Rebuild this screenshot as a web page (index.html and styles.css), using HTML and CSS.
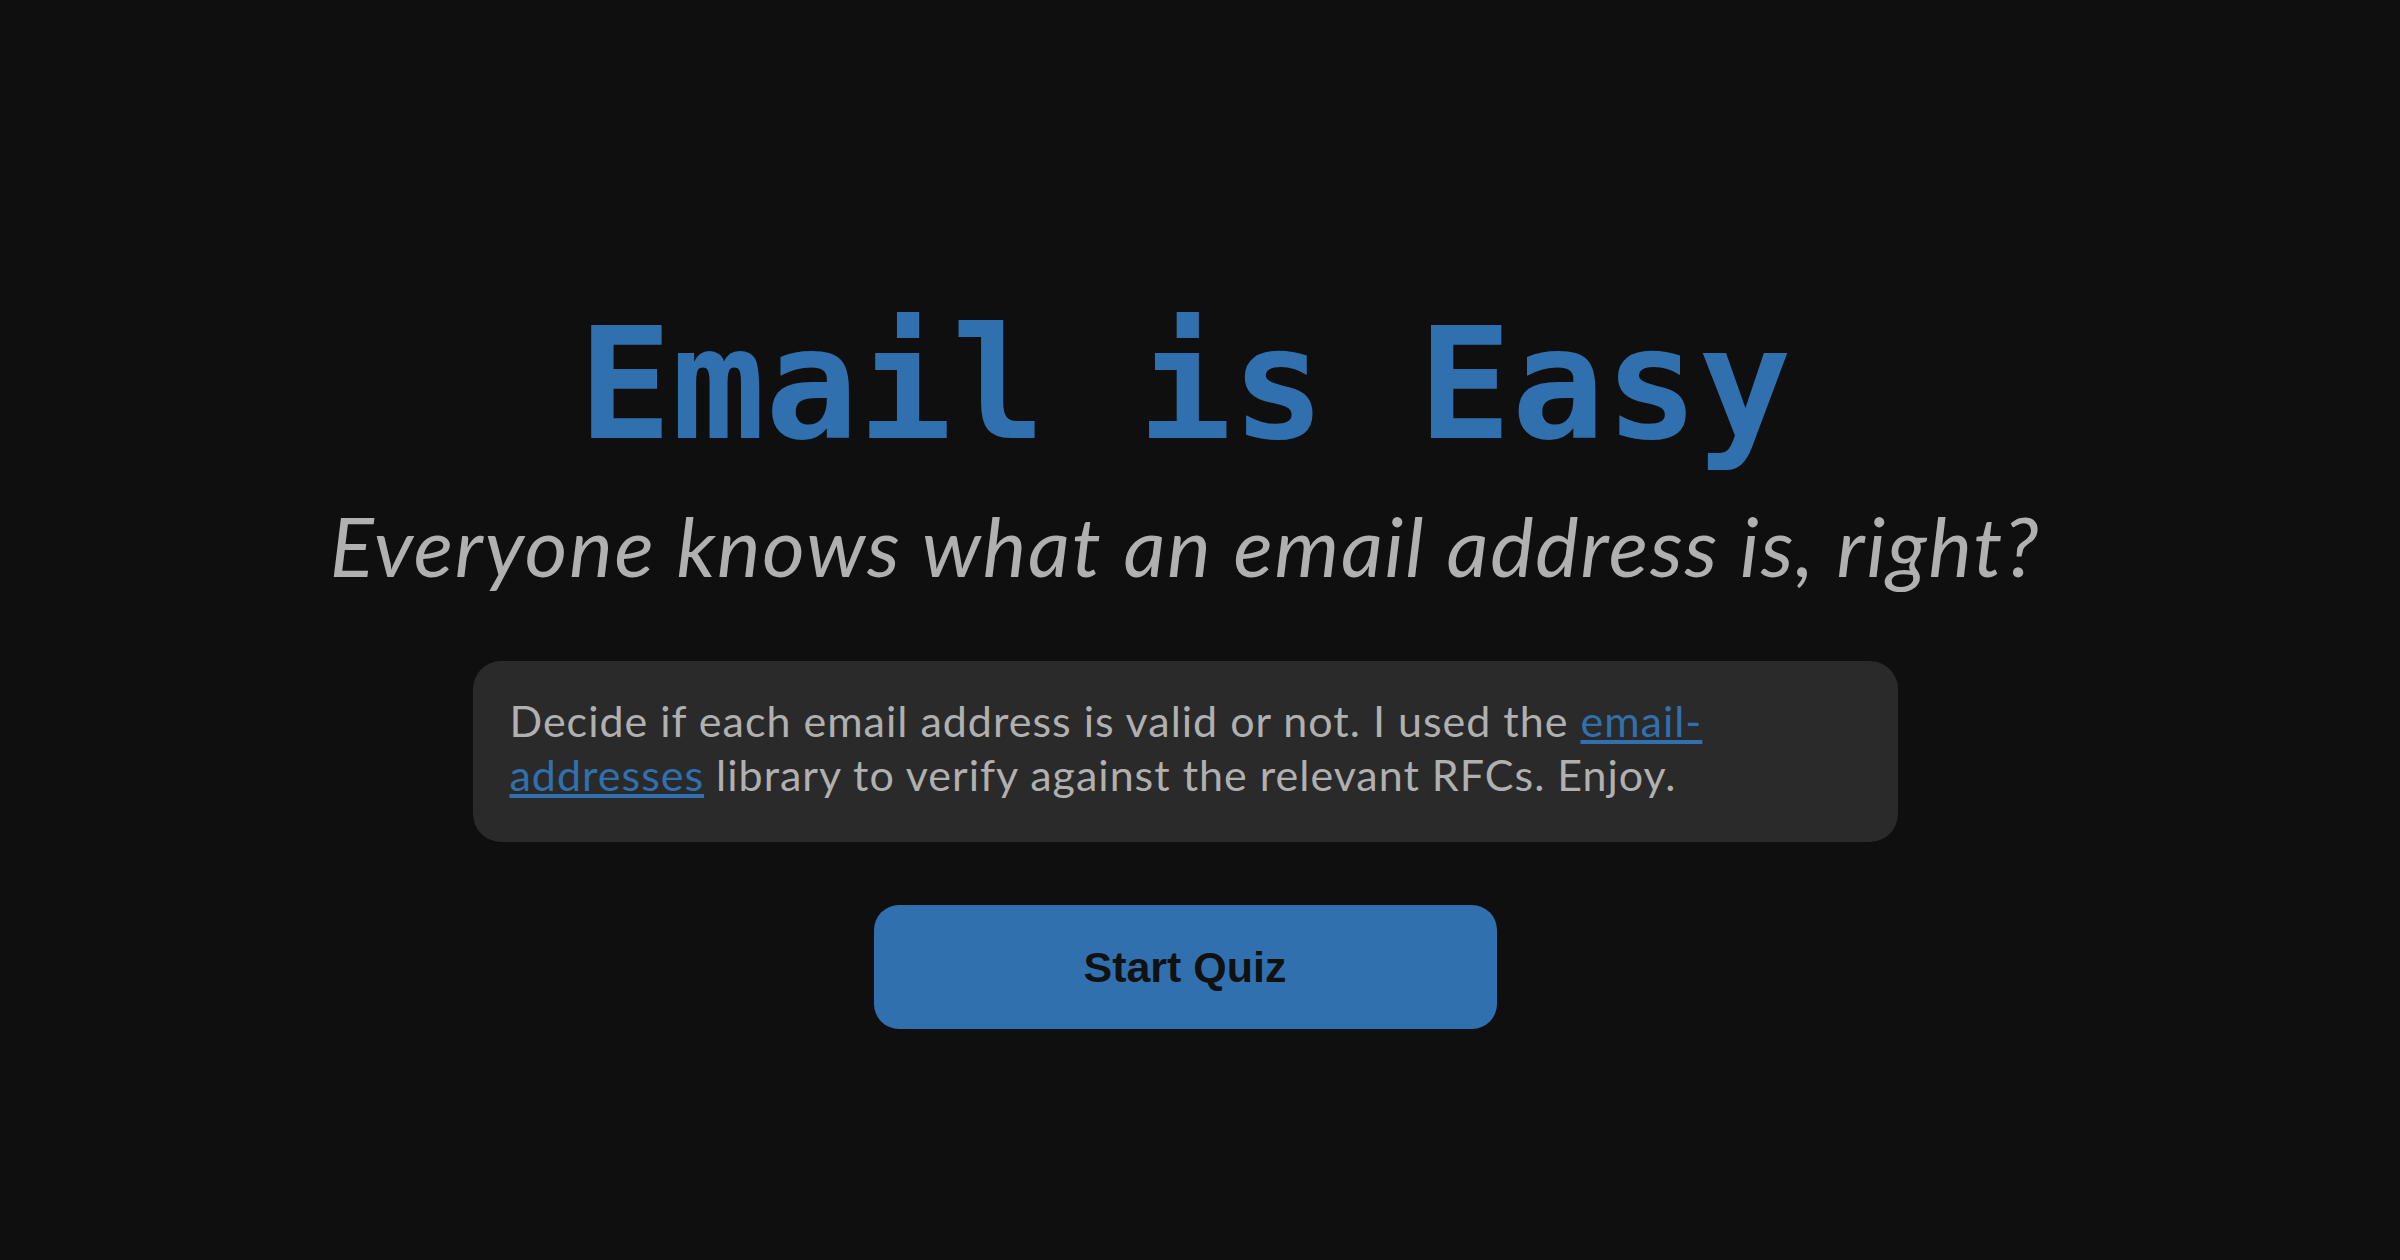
FILE: index.html
```html
<!DOCTYPE html>
<html lang="en">
<head>
<meta charset="utf-8">
<title>Email is Easy</title>
<link rel="stylesheet" href="styles.css">
</head>
<body>
<main class="page">
  <h1 class="title">Email is Easy</h1>
  <p class="subtitle">Everyone knows what an email address is, right?</p>
  <div class="intro">
    <p>Decide if each email address is valid or not. I used the <a href="#">email-addresses</a> library to verify against the relevant RFCs. Enjoy.</p>
  </div>
  <button class="start">Start Quiz</button>
</main>
</body>
</html>
```

FILE: styles.css
```css
html, body {
  margin: 0;
  padding: 0;
  background: #0f0f0f;
  height: 100%;
}

.page {
  display: flex;
  flex-direction: column;
  align-items: center;
  padding: 307px 30px 0 0;
  box-sizing: border-box;
  min-height: 100%;
}

.title {
  margin: 0;
  font-family: "DejaVu Sans Mono", monospace;
  font-weight: bold;
  font-size: 155px;
  line-height: 1;
  color: #3070ae;
}

.subtitle {
  margin: 34px 0 0;
  font-family: Lato, sans-serif;
  font-style: italic;
  font-weight: 400;
  font-size: 82px;
  letter-spacing: 1.8px;
  line-height: 1.2;
  color: #b0b0b0;
}

.intro {
  margin-top: 67px;
  width: 1425px;
  box-sizing: border-box;
  background: #2a2a2a;
  border-radius: 28px;
  padding: 33px 37px 40px;
}

.intro p {
  margin: 0;
  font-family: Lato, sans-serif;
  font-size: 43px;
  letter-spacing: 1px;
  line-height: 54px;
  color: #b0b0b0;
}

.intro a {
  color: #3070ae;
  text-decoration: underline;
}

.start {
  margin-top: 63px;
  width: 623px;
  height: 124px;
  border: none;
  border-radius: 25px;
  background: #3070ae;
  color: #111111;
  font-family: "Liberation Sans", Arial, sans-serif;
  font-weight: bold;
  font-size: 43px;
  cursor: pointer;
}
```
